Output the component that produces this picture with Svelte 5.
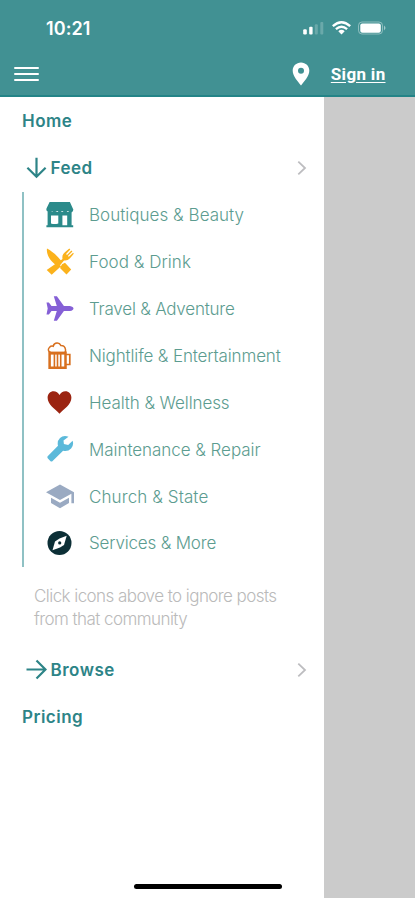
<script lang="ts">
	interface Community {
		icon: string;
		label: string;
		color: string;
		spacing: string;
	}

	const communities: Community[] = [
		{ icon: 'store', label: 'Boutiques & Beauty', color: '#2b8a8a', spacing: '0.03px' },
		{ icon: 'food', label: 'Food & Drink', color: '#fbb21c', spacing: '0.05px' },
		{ icon: 'plane', label: 'Travel & Adventure', color: '#8560d6', spacing: '-0.22px' },
		{ icon: 'beer', label: 'Nightlife & Entertainment', color: '#d8701f', spacing: '-0.14px' },
		{ icon: 'heart', label: 'Health & Wellness', color: '#9b2411', spacing: '-0.1px' },
		{ icon: 'wrench', label: 'Maintenance & Repair', color: '#5bb9da', spacing: '-0.05px' },
		{ icon: 'cap', label: 'Church & State', color: '#9aaac2', spacing: '0.1px' },
		{ icon: 'compass', label: 'Services & More', color: '#0c2f36', spacing: '-0.18px' }
	];
</script>

{#snippet chevron()}
	<svg class="chevron" width="10" height="16" viewBox="0 0 10 16">
		<path d="M1.3 1.6 8 8l-6.7 6.4" />
	</svg>
{/snippet}

<div class="screen">
	<header class="header">
		<div class="status">
			<span class="status__time">10:21</span>
			<svg class="status__icons" width="86" height="16" viewBox="0 0 86 16">
				<g fill="#fff">
					<rect x="1.2" y="9.2" width="3.6" height="5.3" rx="1.2" />
					<rect x="7.2" y="6.7" width="3.4" height="7.8" rx="1" />
					<rect x="12.8" y="4.3" width="3" height="10.2" rx="1" opacity="0.22" />
					<rect x="18.3" y="2" width="3" height="12.5" rx="1" opacity="0.22" />
				</g>
				<g fill="none" stroke="#fff" stroke-width="2.3">
					<path d="M30.8 6.2Q39.5-1.8 48.2 6.2" />
					<path d="M33.9 9.2Q39.5 4.3 45.1 9.2" />
				</g>
				<path d="M36.3 11.2Q39.5 8.5 42.7 11.2L39.5 14.6Z" fill="#fff" />
				<rect x="56.5" y="2" width="24" height="12" rx="3.5" fill="none" stroke="#fff" opacity="0.4" />
				<rect x="58.3" y="3.5" width="20.5" height="9.2" rx="2" fill="#fff" />
				<path d="M82 5.6q3 2.400 0 4.800z" fill="#fff" opacity="0.5" />
			</svg>
		</div>

		<div class="toolbar">
			<button class="menu-button" type="button" aria-label="Close menu">
				<span></span>
				<span></span>
				<span></span>
			</button>
			<div class="toolbar__right">
				<svg width="18" height="24" viewBox="0 0 18 24">
					<path
						fill="#fff"
						fill-rule="evenodd"
						d="M9 .5C4.3.5.7 4.1.7 8.7.7 14 6 19.5 9 23.5c3-4 8.3-9.5 8.3-14.800C17.300 4.100 13.700.5 9 .5zM9 5.700a3 3 0 1 1 0 6 3 3 0 0 1 0-6z"
					/>
				</svg>
				<a class="sign-in" href="#sign-in">Sign in</a>
			</div>
		</div>
	</header>

	<div class="body">
		<nav class="drawer">
			<a class="row" href="#home">Home</a>
			<button class="row" type="button">
				<svg class="arrow" width="21" height="22" viewBox="0 0 21 22">
					<path d="M10.5.800v19M1.400 10.800l9.100 9 9.100-9" />
				</svg>
				<span>Feed</span>
				{@render chevron()}
			</button>

			<ul class="communities">
				{#each communities as community (community.label)}
					<li style:color={community.color}>
						<svg width="28" height="28" viewBox="0 0 28 28" fill="currentColor">
							{#if community.icon === 'store'}
								<path d="M3.600 1h20.300L27.300 8.500q.2 2.600-2.300 2.900-2 .1-3.100-1.300-1.600 1.700-3.500 1.200-1.400-.1-2.300-1.200-2.400 2.400-4.800 0-2.200 2.100-5.200.4-3.200 1.900-5.200-.4-1-1.400-.2-3z" />
								<path fill-rule="evenodd" d="M1.600 11h24V24.200h1.600v2H.4v-2h1.200zM5 14.600v7.800q3.500 1.200 7.300 0v-7.800zM16.400 14.600v9.600h4.800v-9.600z" />
							{:else if community.icon === 'food'}
								<path d="M1 .5C6.500 3.500 11 7.500 15.200 12.700l-3.700 3.700q-3 .5-5.300-2.600C2.500 10 .2 5 1 .5z" />
								<path d="M16 16.300l3-1.500 6.200 6.700-4.700 5-6.500-6.600zM12.500 15.700l-2.500-.2L.7 22l5 4.700 9.300-8.500z" />
								<path d="M10.500 15.500l6-4.600q-.8-4.200 2.400-6.700L23.300.5l1 1-4.200 4.600.9.9 4.400-4.500 1 1-4.500 4.400.9.9 4.300-4 .7 1-3.800 4.400q-2.500 2.900-6 2.300l-4.100 5z" />
							{:else if community.icon === 'plane'}
								<path d="M7.800 1.300h3.100l7 9.600h6q3.600.8 3.600 2.600t-3.600 2.600h-6l-7 9.600H7.800l3-9.600H5.500l-2.600 3.500H.5l1.200-6.100L.5 7.400h2.400l2.600 3.500h5.300z" />
							{:else if community.icon === 'beer'}
								<g fill="none" stroke="currentColor">
									<path d="M4 10.500Q.9 8 3.600 5.200 5 3.500 7.200 4.200 8 .9 11.300 1.100q2.500.1 3.500 2.300 4.200-.1 4.700 4.100v3" stroke-width="1.5" />
									<path d="M3.500 10.500h16M19.500 12.500h4.300v10h-4.300" stroke-width="1.700" />
									<path d="M3.600 9.500v16.200h15.900V9.500" stroke-width="2.500" />
									<path d="M8.400 11v14M11.500 11v14M14.700 11v14" stroke-width="1.600" />
								</g>
								<path d="M3 9.800h17v2.800H3z" />
							{:else if community.icon === 'heart'}
								<path d="M13.500 24.700C9.500 20.300 1.600 15.500 1.600 8.700c0-3.700 2.700-6.400 6-6.400 2.500 0 4.700 1.500 5.900 3.700 1.200-2.200 3.400-3.700 5.900-3.700 3.300 0 6 2.700 6 6.400 0 6.800-7.900 11.600-11.900 16z" />
							{:else if community.icon === 'wrench'}
								<path d="M22.500.8q-5-2-8.500 1.300-3.200 3.200-2 7.700L1.900 20.100q-1.100 1.200 0 2.400l2.400 2.400q1.200 1 2.300 0l10.500-10.200q4.700 1.200 8-2.300 3-3.400 1.500-7.700l-4.400 4.200-4.300-.9-.4-3.500z" />
							{:else if community.icon === 'cap'}
								<path d="M14 1.400L28 9.300v10.900h-2.600v-9.400L14 17 0 9.200z" />
								<path d="M5 14.700l9 5 9-5v5.200l-9 5.400-9-5.400z" />
							{:else}
								<circle cx="13.500" cy="14" r="12" />
								<path fill="#fff" d="M20.700 6.800l-2.700 9.300-4 2.500-7.500 2.700 2.500-8.800 4.500-3z" />
								<circle cx="13.700" cy="13.900" r="1.600" />
							{/if}
						</svg>
						<span class="label" style:letter-spacing={community.spacing}>{community.label}</span>
					</li>
				{/each}
			</ul>

			<p class="hint">Click icons above to ignore posts<br />from that community</p>

			<button class="row" type="button">
				<svg class="arrow" width="21" height="22" viewBox="0 0 21 22">
					<path d="M.5 10.500h19M10.500 1.400l9 9.100-9 9.100" />
				</svg>
				<span>Browse</span>
				{@render chevron()}
			</button>
			<a class="row" href="#pricing">Pricing</a>

			<div class="home-indicator"></div>
		</nav>
		<div class="backdrop"></div>
	</div>
</div>

<style>
	:global(body) {
		background: #fff;
	}

	.screen {
		display: flex;
		flex-direction: column;
		width: 415px;
		height: 900px;
		overflow: hidden;
		font-family: Inter, 'Liberation Sans', sans-serif;
	}

	button {
		padding: 0;
		background: none;
		border: 0;
		font: inherit;
	}

	.header {
		box-sizing: border-box;
		flex: none;
		height: 97px;
		background: #419193;
		border-bottom: 2px solid #238487;
		color: #fff;
	}

	.status {
		display: flex;
		align-items: center;
		justify-content: space-between;
		height: 56px;
		padding: 0 27px 0 46px;
	}

	.status__time {
		font-size: 18px;
		font-weight: 600;
		letter-spacing: 0.1px;
	}

	.toolbar {
		display: flex;
		align-items: center;
		justify-content: space-between;
		height: 36px;
		padding: 0 29.5px 0 14px;
	}

	.menu-button {
		display: grid;
		gap: 4px;
		width: 25px;
	}

	.menu-button span {
		height: 2.2px;
		border-radius: 1px;
		background: #fff;
	}

	.toolbar__right {
		display: flex;
		align-items: center;
		gap: 21px;
	}

	.sign-in {
		color: #fff;
		font-family: Roboto, sans-serif;
		font-size: 17px;
		font-weight: 700;
		letter-spacing: 0.32px;
		text-underline-offset: 2px;
	}

	.body {
		display: flex;
		flex: 1;
	}

	.drawer {
		box-sizing: border-box;
		display: flex;
		flex-direction: column;
		width: 324px;
		padding: 1px 0 11px 22px;
		background: #fff;
	}

	.backdrop {
		flex: 1;
		margin-bottom: 2px;
		background: #cbcbcb;
	}

	.row {
		display: flex;
		align-items: center;
		flex: none;
		height: 46.9px;
		padding-right: 17px;
		color: #2d8487;
		font-size: 17px;
		font-weight: 600;
		letter-spacing: 0.5px;
		text-decoration: none;
	}

	.arrow {
		margin: 0 3.5px 0 4px;
		fill: none;
		stroke: #2d8487;
		stroke-width: 2.2;
	}

	.chevron {
		margin-left: auto;
		fill: none;
		stroke: #bdbdc0;
		stroke-width: 1.8;
	}

	.communities {
		margin: 0;
		padding: 0 0 0 22px;
		list-style: none;
		border-left: 2px solid #8fc1c4;
	}

	.communities li {
		display: flex;
		align-items: center;
		gap: 15px;
		height: 46.9px;
	}

	.label {
		color: #5c9c90;
		font-size: 17px;
		font-weight: 300;
		white-space: nowrap;
	}

	.hint {
		height: 61.5px;
		box-sizing: content-box;
		margin: 0;
		padding: 18px 0 0 12px;
		color: #bababa;
		font-size: 17px;
		font-weight: 300;
		line-height: 23px;
		letter-spacing: -0.56px;
		white-space: nowrap;
	}

	.home-indicator {
		width: 148px;
		height: 5px;
		margin: auto 0 0 112px;
		border-radius: 3px;
		background: #000;
	}
</style>
